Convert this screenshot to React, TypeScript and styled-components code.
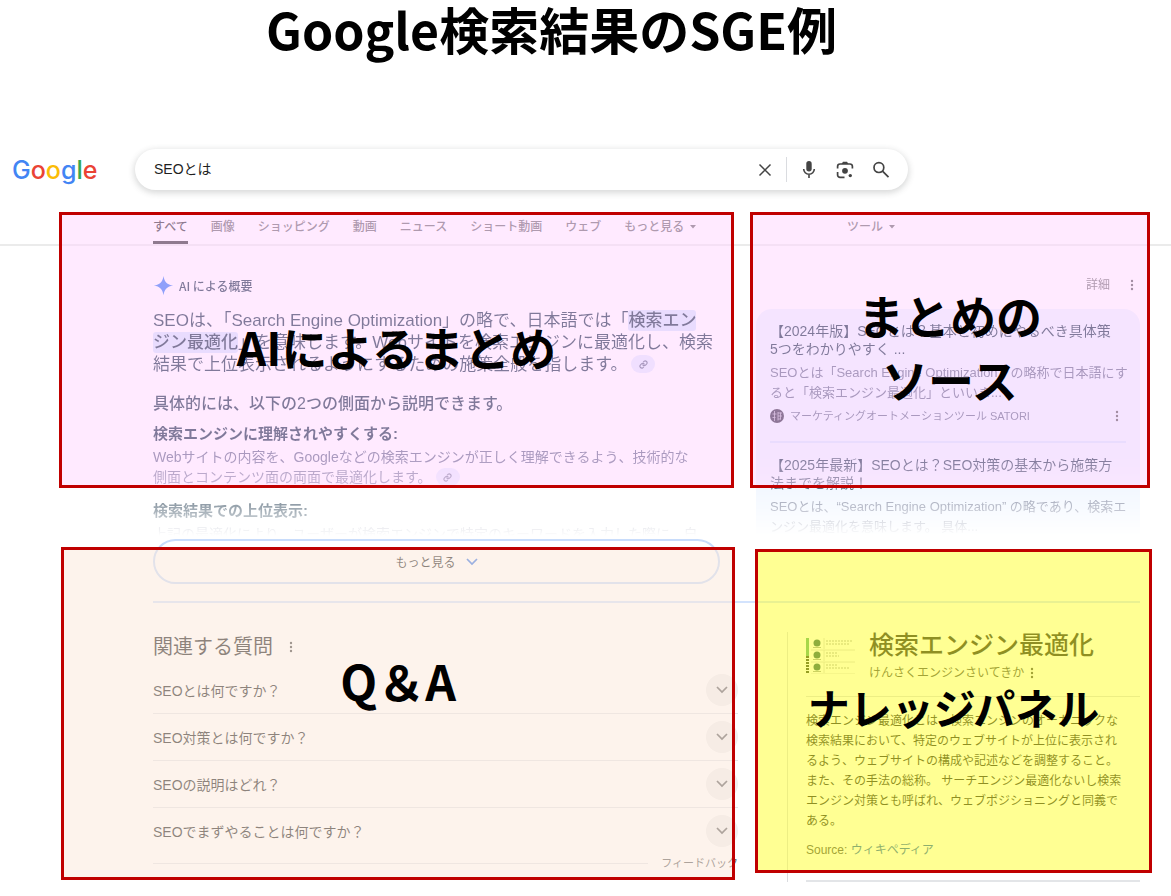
import React from 'react';
import styled, { createGlobalStyle } from 'styled-components';

const GlobalStyle = createGlobalStyle`
  *, *::before, *::after { box-sizing: border-box; }
  body {
    margin: 0;
    background: #fff;
    color: #1f1f1f;
    font-family: "Liberation Sans", "Noto Sans CJK JP", sans-serif;
    font-size: 14px;
  }
  h1, h2, h3, p, ul { margin: 0; padding: 0; }
  ul { list-style: none; }
  a { color: inherit; text-decoration: none; }
  button {
    font: inherit; color: inherit; background: none; border: 0; padding: 0; cursor: pointer;
  }
`;

const Page = styled.div`
  position: relative;
  min-height: 896px;
`;

const PageTitle = styled.h1`
  padding-right: 68px;
  text-align: center;
  font: 700 50px/56px "Noto Sans CJK JP", sans-serif;
  color: #000;
`;

/* ---------- search header ---------- */

const Header = styled.header`
  display: flex;
  align-items: center;
  margin-top: 93px;
  padding: 0 24px 0 12px;
`;

const Logo = styled.a`
  flex: 0 0 123px;
  font: 500 25px/40px Inter, sans-serif;
`;

const Letter = styled.span<{ $color: string }>`
  color: ${(p) => p.$color};
`;

const SearchBox = styled.form`
  display: flex;
  align-items: center;
  flex: 0 1 773px;
  height: 41px;
  padding: 0 17px 0 19px;
  border-radius: 21px;
  background: #fff;
  box-shadow: 0 2px 6px 1px rgba(60, 64, 67, 0.2);
`;

const SearchInput = styled.input`
  flex: 1;
  min-width: 0;
  border: 0;
  outline: 0;
  padding: 0 0 2px;
  background: transparent;
  color: #1f1f1f;
  font: 14px/20px "Liberation Sans", "Noto Sans CJK JP", sans-serif;
`;

const SearchTools = styled.div`
  display: flex;
  align-items: center;
  gap: 16px;
`;

const IconButton = styled.button`
  display: flex;
  color: #444;
`;

const ToolDivider = styled.span`
  width: 1px;
  height: 25px;
  margin: 0 -4px 0 -2px;
  background: #dadce0;
`;

/* ---------- tabs ---------- */

const Nav = styled.nav`
  display: grid;
  grid-template-columns: minmax(0, 567fr) minmax(0, 384fr);
  column-gap: 36px;
  align-items: end;
  height: 56px;
  padding: 0 31px 0 153px;
  border-bottom: 2px solid #ebebeb;
`;

const Tabs = styled.div`
  display: flex;
  gap: 23px;
`;

const Tab = styled.a<{ $active?: boolean }>`
  padding-bottom: 4px;
  border-bottom: 3px solid ${(p) => (p.$active ? '#1f1f1f' : 'transparent')};
  color: ${(p) => (p.$active ? '#1f1f1f' : '#5e5e5e')};
  font-size: 12px;
  font-weight: 500;
  line-height: 20px;
  white-space: nowrap;
`;

const MenuTab = styled.button`
  display: flex;
  align-items: center;
  gap: 6px;
  padding-bottom: 7px;
  color: #5e5e5e;
  font-size: 12px;
  font-weight: 500;
  line-height: 20px;
  white-space: nowrap;
`;

const ToolArea = styled.div`
  padding-left: 91px;
`;

/* ---------- AI overview ---------- */

const Columns = styled.main`
  display: grid;
  grid-template-columns: minmax(0, 567fr) minmax(0, 384fr);
  column-gap: 36px;
  margin: 0 31px 0 153px;
  padding-bottom: 17px;
  border-bottom: 2px solid #d3e3fd;
`;

const Fading = styled.div`
  height: 293px;
  padding-top: 29px;
  overflow: hidden;
  mask-image: linear-gradient(#000 72%, rgba(0, 0, 0, 0.4) 89%, transparent 99%);
`;

const OverviewHead = styled.div`
  display: flex;
  align-items: center;
  gap: 5px;
  color: #001d35;
  font: 500 12px/20px "Noto Sans CJK JP", sans-serif;
`;

const Lead = styled.p`
  margin-top: 14px;
  color: #001d35;
  font-size: 17px;
  line-height: 22px;
  white-space: nowrap;
`;

const Mark = styled.mark`
  padding: 1px 0;
  border-radius: 3px;
  background: #d3e3fd;
  color: inherit;
  font-weight: 500;
`;

const SubLead = styled.p`
  margin-top: 17px;
  color: #001d35;
  font-size: 16px;
  font-weight: 500;
  line-height: 22px;
`;

const PointTitle = styled.h3`
  margin-top: 9px;
  color: #001d35;
  font-size: 15px;
  font-weight: 700;
  line-height: 20px;
  p + & { margin-top: 14px; }
  ${SubLead} + & { margin-top: 9px; }
`;

const PointText = styled.p`
  margin-top: 3px;
  color: #545d7e;
  font-size: 14px;
  line-height: 20px;
  white-space: nowrap;
`;

const Chip = styled.button`
  display: inline-flex;
  align-items: center;
  justify-content: center;
  width: 24px;
  height: 18px;
  margin: 1px 0 0 4px;
  border-radius: 9px;
  background: #e0e9ff;
  color: #545d7e;
  vertical-align: top;
`;

const MoreButton = styled.button`
  display: flex;
  align-items: center;
  justify-content: center;
  gap: 10px;
  width: 100%;
  height: 45px;
  border: 2px solid #c8dcfb;
  border-radius: 23px;
  color: #1f1f1f;
  font-size: 12px;
`;

const SourceHead = styled.div`
  display: flex;
  align-items: center;
  justify-content: flex-end;
  gap: 20px;
  padding-right: 6px;
  color: #5e5e5e;
  font-size: 12px;
  line-height: 20px;
`;

const SourceCard = styled.div`
  margin-top: 14px;
  padding: 13px 14px 20px;
  border-radius: 16px;
  background: #ebf3ff;
`;

const Source = styled.article`
  & + & {
    margin-top: 15px;
    padding-top: 13px;
    border-top: 2px solid #d3e3fd;
  }
`;

const SourceTitle = styled.a`
  display: block;
  color: #001d35;
  font-size: 14px;
  line-height: 18px;
  white-space: nowrap;
`;

const Snippet = styled.p`
  margin-top: 5px;
  color: #545d7e;
  font-size: 13px;
  line-height: 20px;
  white-space: nowrap;
`;

const Site = styled.div`
  display: flex;
  align-items: center;
  gap: 6px;
  margin-top: 3px;
  padding-right: 7px;
  color: #545d7e;
  font-size: 11px;
  line-height: 20px;
  & > button { margin-left: auto; }
`;

/* ---------- questions and knowledge panel ---------- */

const LowerColumns = styled.div`
  display: grid;
  grid-template-columns: minmax(0, 585fr) minmax(0, 353fr);
  column-gap: 49px;
  align-items: start;
  padding: 29px 31px 0 153px;
`;

const QuestionsHead = styled.div`
  display: flex;
  align-items: center;
  gap: 16px;
  h2 { font-size: 20px; font-weight: 400; line-height: 30px; }
`;

const QuestionList = styled.ul`
  margin-top: 5px;
`;

const Question = styled.li`
  height: 47px;
  border-bottom: 1px solid #e3e5e8;
  &:last-child { border-bottom-color: transparent; }
`;

const QuestionButton = styled.button`
  display: flex;
  align-items: center;
  justify-content: space-between;
  width: 100%;
  height: 46px;
  font-size: 14px;
  text-align: left;
`;

const Round = styled.span`
  display: flex;
  align-items: center;
  justify-content: center;
  width: 32px;
  height: 32px;
  border-radius: 50%;
  background: #f0f0f0;
  color: #5e5e5e;
`;

const Feedback = styled.div`
  display: flex;
  align-items: center;
  gap: 13px;
  color: #5e5e5e;
  font-size: 11px;
  line-height: 16px;
  &::before { content: ""; flex: 1; height: 1px; background: #e3e5e8; }
`;

const Panel = styled.aside`
  padding-left: 18px;
  border-left: 1px solid #dadce0;
`;

const PanelInner = styled.div`
  padding-bottom: 20px;
  border-bottom: 2px solid #e3e5e8;
`;

const PanelHead = styled.div`
  display: flex;
  gap: 14px;
  padding-bottom: 13px;
  border-bottom: 1px solid #dadce0;
  h2 { font-size: 25px; font-weight: 500; line-height: 26px; white-space: nowrap; }
  & > svg { flex: none; margin-top: 6px; }
`;

const Reading = styled.div`
  display: flex;
  align-items: center;
  gap: 6px;
  margin-top: 5px;
  color: #474747;
  font-size: 12px;
  line-height: 20px;
`;

const PanelText = styled.p`
  margin-top: 14px;
  color: #1f1f1f;
  font-size: 12px;
  line-height: 20px;
  white-space: nowrap;
  & + & { margin-top: 9px; color: #474747; }
  a { color: #1a5fb4; }
`;

/* ---------- annotation frames over the page ---------- */

const Frame = styled.div<{ $left: string; $top: number; $width: string; $height: number; $tint: string; $lift?: number; $size?: number }>`
  position: absolute;
  left: ${(p) => p.$left};
  top: ${(p) => p.$top}px;
  width: ${(p) => p.$width};
  height: ${(p) => p.$height}px;
  display: flex;
  align-items: center;
  justify-content: center;
  padding-bottom: ${(p) => p.$lift ?? 8}px;
  border: 3px solid #c00000;
  background: ${(p) => p.$tint};
  color: #000;
  font: 700 ${(p) => p.$size ?? 46}px/64px "Noto Sans CJK JP", sans-serif;
  text-align: center;
  white-space: nowrap;
  pointer-events: none;
`;

const PINK = 'rgba(255, 213, 255, 0.5)';
const PEACH = 'rgba(251, 231, 218, 0.5)';
const YELLOW = 'rgba(255, 255, 40, 0.5)';

/* ---------- icons ---------- */

const Dots = ({ label }: { label: string }) => (
  <IconButton type="button" aria-label={label}>
    <svg width="4" height="12" viewBox="0 0 4 12" fill="currentColor">
      <circle cx="2" cy="2" r="1.2" />
      <circle cx="2" cy="6" r="1.2" />
      <circle cx="2" cy="10" r="1.2" />
    </svg>
  </IconButton>
);

const Caret = () => (
  <svg width="6" height="4" viewBox="0 0 6 4" fill="currentColor">
    <path d="M0 0h6L3 3.5z" />
  </svg>
);

const Chevron = ({ color = 'currentColor' }: { color?: string }) => (
  <svg width="12" height="8" viewBox="0 0 12 8" fill="none" stroke={color} strokeWidth="1.7">
    <path d="M1 1l5 5 5-5" />
  </svg>
);

const LinkIcon = () => (
  <svg width="9" height="9" viewBox="0 0 24 24" fill="none" stroke="currentColor" strokeWidth="3" strokeLinecap="round">
    <path d="M10 13a5 5 0 0 0 7.5.5l3-3a5 5 0 0 0-7-7l-1.7 1.7" />
    <path d="M14 11a5 5 0 0 0-7.5-.5l-3 3a5 5 0 0 0 7 7l1.7-1.7" />
  </svg>
);

const Spark = () => (
  <svg width="21" height="21" viewBox="0 0 24 24" fill="#1f6bf5">
    <path d="M12 1c1.2 7 4 9.800 11 11-7 1.200-9.800 4-11 11-1.200-7-4-9.800-11-11C8 10.800 10.800 8 12 1z" />
  </svg>
);

const ClearIcon = () => (
  <svg width="14" height="14" viewBox="0 0 14 14" fill="none" stroke="currentColor" strokeWidth="1.500">
    <path d="M1.500 1.500l11 11M12.500 1.500l-11 11" />
  </svg>
);

const MicIcon = () => (
  <svg width="20" height="20" viewBox="0 0 20 20" fill="none" stroke="currentColor" strokeWidth="1.600">
    <rect x="7.300" y="1" width="5.400" height="10.500" rx="2.700" fill="currentColor" stroke="none" />
    <path d="M4.700 9a5.300 5.300 0 0 0 10.600 0M10 14.300V18" />
  </svg>
);

const LensIcon = () => (
  <svg width="20" height="20" viewBox="0 0 20 20" fill="none" stroke="currentColor" strokeWidth="1.700">
    <path d="M2.600 8.500V6.400A2.400 2.400 0 0 1 5 4h10a2.400 2.400 0 0 1 2.400 2.400v2.100M2.600 12v3A2.400 2.400 0 0 0 5 17.400h4.500" />
    <path d="M6.500 4L8 1.800h4L13.500 4z" fill="currentColor" stroke="none" />
    <circle cx="10" cy="10.800" r="2.900" fill="currentColor" stroke="none" />
    <circle cx="15.300" cy="15.600" r="1.700" fill="currentColor" stroke="none" />
  </svg>
);

const SearchIcon = () => (
  <svg width="20" height="20" viewBox="0 0 20 20" fill="none" stroke="currentColor" strokeWidth="1.700">
    <circle cx="7.900" cy="7.600" r="4.900" />
    <path d="M11.500 11.200l6 6" />
  </svg>
);

const Favicon = () => (
  <svg width="14" height="14" viewBox="0 0 14 14">
    <circle cx="7" cy="7" r="7" fill="#1d1730" />
    <path d="M4.500 2v10M2.500 5h4M2.500 8.500h3M8 3v8.500M10.500 3.500v7M8 4h4M8 7h4M8 10h3" stroke="#b8adc8" strokeWidth="0.800" fill="none" />
  </svg>
);

const Thumbnail = () => (
  <svg width="49" height="36" viewBox="0 0 49 36">
    <rect x="0" y="0" width="3" height="18" fill="#4fae6a" />
    <path d="M1.500 18v18" stroke="#2a3a1c" strokeWidth="3" strokeDasharray="2 1" />
    {[5, 17, 29].map((y) => (
      <g key={y}>
        <circle cx="11" cy={y} r="3.500" fill="#1f5c50" />
        <path d={`M7 ${y + 4.500}h8`} stroke="#9aa59a" strokeWidth="1" />
        <path d={`M20 ${y - 2}h${y === 5 ? 26 : 11}M20 ${y + 1}h${y === 17 ? 13 : 24}`} stroke="#a6aaa6" strokeWidth="1" strokeDasharray="2 1" />
        <path d={`M5 ${y + 7}h44`} stroke="#d8d8d8" strokeWidth="1" />
        <path d={`M18 ${y - 5}v11`} stroke="#d8d8d8" strokeWidth="1" />
      </g>
    ))}
  </svg>
);

const wordmark: [string, string][] = [
  ['G', '#4285f4'],
  ['o', '#ea4335'],
  ['o', '#fbbc05'],
  ['g', '#4285f4'],
  ['l', '#34a853'],
  ['e', '#ea4335'],
];

const tabs = ['すべて', '画像', 'ショッピング', '動画', 'ニュース', 'ショート動画', 'ウェブ'];

const questions = [
  'SEOとは何ですか？',
  'SEO対策とは何ですか？',
  'SEOの説明はどれ？',
  'SEOでまずやることは何ですか？',
];

export default function App() {
  return (
    <Page lang="ja">
      <GlobalStyle />
      <PageTitle>Google検索結果のSGE例</PageTitle>

      <Header>
        <Logo href="#" aria-label="Google">
          {wordmark.map(([char, color], i) => (
            <Letter key={i} $color={color}>{char}</Letter>
          ))}
        </Logo>
        <SearchBox role="search" onSubmit={(e) => e.preventDefault()}>
          <SearchInput aria-label="検索" defaultValue="SEOとは" />
          <SearchTools>
            <IconButton type="button" aria-label="クリア"><ClearIcon /></IconButton>
            <ToolDivider />
            <IconButton type="button" aria-label="音声検索"><MicIcon /></IconButton>
            <IconButton type="button" aria-label="画像で検索"><LensIcon /></IconButton>
            <IconButton type="submit" aria-label="検索"><SearchIcon /></IconButton>
          </SearchTools>
        </SearchBox>
      </Header>

      <Nav>
        <Tabs>
          {tabs.map((tab, i) => (
            <Tab key={tab} href="#" $active={i === 0}>{tab}</Tab>
          ))}
          <MenuTab type="button">もっと見る<Caret /></MenuTab>
        </Tabs>
        <ToolArea>
          <MenuTab type="button">ツール<Caret /></MenuTab>
        </ToolArea>
      </Nav>

      <Columns>
        <section>
          <Fading>
            <OverviewHead><Spark />AI による概要</OverviewHead>
            <Lead>
              SEOは、「Search Engine Optimization」の略で、日本語では「<Mark>検索エン</Mark><br />
              <Mark>ジン最適化</Mark>」を意味します。Webサイトを検索エンジンに最適化し、検索<br />
              結果で上位表示されるようにするための施策全般を指します。
              <Chip type="button" aria-label="リンク"><LinkIcon /></Chip>
            </Lead>
            <SubLead>具体的には、以下の2つの側面から説明できます。</SubLead>
            <PointTitle>検索エンジンに理解されやすくする:</PointTitle>
            <PointText>
              Webサイトの内容を、Googleなどの検索エンジンが正しく理解できるよう、技術的な<br />
              側面とコンテンツ面の両面で最適化します。
              <Chip type="button" aria-label="リンク"><LinkIcon /></Chip>
            </PointText>
            <PointTitle>検索結果での上位表示:</PointTitle>
            <PointText>
              上記の最適化により、ユーザーが検索エンジンで特定のキーワードを入力した際に、自
            </PointText>
          </Fading>
          <MoreButton type="button">もっと見る<Chevron color="#3b78e7" /></MoreButton>
        </section>

        <Fading>
          <SourceHead>詳細<Dots label="メニュー" /></SourceHead>
          <SourceCard>
            <Source>
              <SourceTitle href="#">
                【2024年版】SEOとは？基本と初めにやるべき具体策<br />5つをわかりやすく ...
              </SourceTitle>
              <Snippet>
                SEOとは「Search Engine Optimization」の略称で日本語にす<br />ると「検索エンジン最適化」といいま...
              </Snippet>
              <Site>
                <Favicon />マーケティングオートメーションツール SATORI
                <Dots label="詳細メニュー" />
              </Site>
            </Source>
            <Source>
              <SourceTitle href="#">
                【2025年最新】SEOとは？SEO対策の基本から施策方<br />法までを解説！
              </SourceTitle>
              <Snippet>
                SEOとは、“Search Engine Optimization” の略であり、検索エ<br />ンジン最適化を意味します。 具体...
              </Snippet>
            </Source>
          </SourceCard>
        </Fading>
      </Columns>

      <LowerColumns>
        <section>
          <QuestionsHead>
            <h2>関連する質問</h2>
            <Dots label="メニュー" />
          </QuestionsHead>
          <QuestionList>
            {questions.map((q) => (
              <Question key={q}>
                <QuestionButton type="button" aria-expanded={false}>
                  {q}
                  <Round><Chevron /></Round>
                </QuestionButton>
              </Question>
            ))}
          </QuestionList>
          <Feedback><a href="#">フィードバック</a></Feedback>
        </section>

        <Panel>
          <PanelInner>
            <PanelHead>
              <Thumbnail />
              <div>
                <h2>検索エンジン最適化</h2>
                <Reading>けんさくエンジンさいてきか<Dots label="メニュー" /></Reading>
              </div>
            </PanelHead>
            <PanelText>
              検索エンジン最適化とは、検索エンジンのオーガニックな<br />
              検索結果において、特定のウェブサイトが上位に表示され<br />
              るよう、ウェブサイトの構成や記述などを調整すること。<br />
              また、その手法の総称。 サーチエンジン最適化ないし検索<br />
              エンジン対策とも呼ばれ、ウェブポジショニングと同義で<br />
              ある。
            </PanelText>
            <PanelText>Source: <a href="#">ウィキペディア</a></PanelText>
          </PanelInner>
        </Panel>
      </LowerColumns>

      <Frame $left="5%" $top={212} $width="57.7%" $height={276} $tint={PINK}>AIによるまとめ</Frame>
      <Frame $left="64.05%" $top={212} $width="34.15%" $height={276} $tint={PINK}>まとめの<br />ソース</Frame>
      <Frame $left="5.2%" $top={547} $width="57.6%" $height={333} $tint={PEACH} $lift={68} $size={48}>Q＆A</Frame>
      <Frame $left="64.5%" $top={549} $width="33.85%" $height={324} $tint={YELLOW} $size={42}>ナレッジパネル</Frame>
    </Page>
  );
}
